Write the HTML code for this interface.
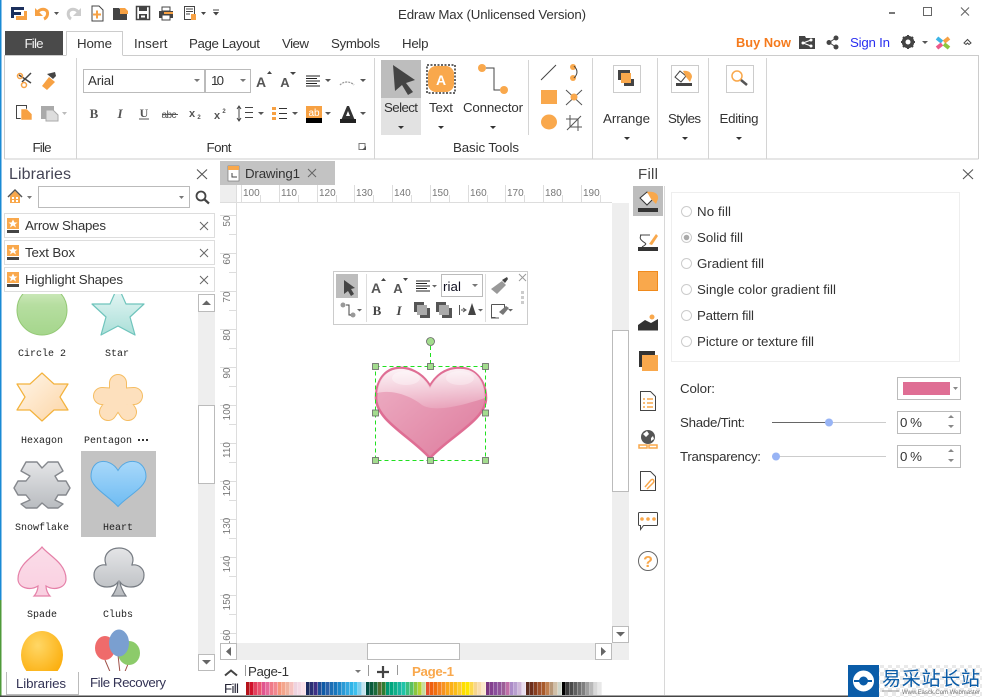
<!DOCTYPE html>
<html lang="en">
<head>
<meta charset="utf-8">
<title>Edraw Max (Unlicensed Version)</title>
<style>
html,body{margin:0;padding:0;background:#fff;width:982px;height:697px;overflow:hidden}
#app{position:relative;width:982px;height:697px;overflow:hidden}
svg{position:absolute;left:0;top:0}
text{font-family:"Liberation Sans","Noto Sans CJK SC",sans-serif;font-size:13.3px;fill:#333}
.m{font-family:"Liberation Mono",monospace;font-size:10px;fill:#222;text-anchor:middle}
.c{text-anchor:middle}
.r{font-size:10px;fill:#777}
.rv{font-size:10px;fill:#777;text-anchor:middle}
#sw{position:absolute;left:246px;top:682px;height:13px;display:flex}
#sw i{display:block;width:4px;height:13px;box-sizing:border-box;border-right:.5px solid rgba(255,255,255,.35)}
</style>
</head>
<body>
<div id="app">
<svg width="982" height="697" viewBox="0 0 982 697">
<defs>
<path id="ht" d="M54,19C46,5 32,0 22,1C8,2 0,15 0,31C0,53 34,69 54,91C74,69 110,53 110,31C110,15 100,2 86,1C74,0 62,5 54,19Z"/>
<linearGradient id="gp" x1="0" y1="0" x2="1" y2="1"><stop offset="0" stop-color="#eeb0c5"/><stop offset="1" stop-color="#dd7a9c"/></linearGradient>
<linearGradient id="gl" x1="0" y1="0" x2="0" y2="1"><stop offset="0" stop-color="#fff" stop-opacity=".85"/><stop offset="1" stop-color="#fff" stop-opacity=".15"/></linearGradient>
<linearGradient id="gb" x1="0" y1="0" x2="0" y2="1"><stop offset="0" stop-color="#a8d8fa"/><stop offset="1" stop-color="#6fbcf2"/></linearGradient>
<linearGradient id="gg" x1="0" y1="0" x2="0" y2="1"><stop offset="0" stop-color="#d8eec8"/><stop offset=".4" stop-color="#b6dea0"/><stop offset="1" stop-color="#a5d68c"/></linearGradient>
<linearGradient id="gt" x1="0" y1="0" x2="0" y2="1"><stop offset="0" stop-color="#eaf8f7"/><stop offset="1" stop-color="#aadfd8"/></linearGradient>
<linearGradient id="go" x1="0" y1="0" x2="1" y2="1"><stop offset="0" stop-color="#fff6ea"/><stop offset="1" stop-color="#fcd5a5"/></linearGradient>
<linearGradient id="gs" x1="0" y1="0" x2="0" y2="1"><stop offset="0" stop-color="#fbdde9"/><stop offset="1" stop-color="#f9cfe0"/></linearGradient>
<linearGradient id="gc" x1="0" y1="0" x2="0" y2="1"><stop offset="0" stop-color="#e4e5e7"/><stop offset="1" stop-color="#b9bcc0"/></linearGradient>
<radialGradient id="gy" cx=".4" cy=".3" r=".8"><stop offset="0" stop-color="#ffd766"/><stop offset="1" stop-color="#fba800"/></radialGradient>
<clipPath id="lib"><rect x="4" y="294" width="193" height="377"/></clipPath>
<pattern id="chk" width="8" height="8" patternUnits="userSpaceOnUse"><rect width="8" height="8" fill="#fff"/><rect width="4" height="4" fill="#e9e9e9"/><rect x="4" y="4" width="4" height="4" fill="#e9e9e9"/></pattern>
</defs>

<!-- window edge -->
<rect x="0" y="0" width="1.5" height="600" fill="#1a8ad4"/>
<rect x="0" y="600" width="1.5" height="97" fill="#4f9a3a"/>
<rect x="0" y="695.5" width="848" height="1.5" fill="#444"/>

<!-- quick access -->
<path d="M11,7h13v3h-10v2h7v3h-7v3h-3z" fill="#1c2f5c"/>
<path d="M16,16h8v-5h3v9h-11z" fill="#f7a143"/>
<path d="M37,14a6,6 0 0 1 10,-3a6,6 0 0 1 -3,8" fill="none" stroke="#f7a143" stroke-width="3"/>
<path d="M35,8v8h8z" fill="#f7a143"/>
<path d="M54,12h5l-2.500,3z" fill="#555"/>
<path d="M79,14a6,6 0 0 0 -10,-3a6,6 0 0 0 2,8" fill="none" stroke="#ccc" stroke-width="3"/>
<path d="M81,8v8h-8z" fill="#ccc"/>
<path d="M92,6h7l4,4v11h-11z" fill="#fff" stroke="#444"/>
<path d="M97,10.500v8M93,14.500h8" stroke="#f7a143" stroke-width="2"/>
<path d="M113,8h6l2,2h6v10h-14z" fill="#444"/>
<path d="M120,8h5l3,3v3h-8z" fill="#f7a143"/>
<rect x="136.500" y="6.500" width="13" height="13" fill="#fff" stroke="#444" stroke-width="1.500"/>
<rect x="139" y="7" width="8" height="4" fill="#444"/><rect x="139" y="14" width="8" height="5" fill="#444"/><rect x="141" y="15.500" width="4" height="2" fill="#fff"/>
<rect x="162" y="7" width="8" height="4" fill="#fff" stroke="#444"/><rect x="159" y="11" width="14" height="7" fill="#444"/><rect x="164" y="12" width="9" height="2" fill="#f7a143"/><rect x="162" y="15" width="8" height="5" fill="#fff" stroke="#444"/>
<rect x="184.500" y="6.500" width="10" height="13" fill="#fff" stroke="#444"/>
<path d="M186,9h7M186,11.500h7M186,14h4" stroke="#444"/>
<path d="M191,14h5v6h-5z" fill="#f7a143"/>
<path d="M201,12h5l-2.500,3z" fill="#444"/>
<path d="M213,9.500h6v1h-6zM213,12h6l-3,3.500z" fill="#444"/>

<text x="398" y="19" textLength="188">Edraw Max (Unlicensed Version)</text>
<rect x="889" y="12" width="6" height="2" fill="#777"/>
<rect x="923.500" y="7.500" width="8" height="8" fill="none" stroke="#666"/>
<path d="M961,7.500l8,8M969,7.500l-8,8" stroke="#666" stroke-width="1.100"/>

<!-- tabs -->
<rect x="5" y="31" width="58" height="24" fill="#4a4a4a"/>
<text x="34" y="48" class="c" style="fill:#f2f2f2" textLength="19">File</text>
<path d="M66.500,55V31.500H122.500V55" fill="#fff" stroke="#ccc"/>
<text x="94.500" y="48" class="c" textLength="35">Home</text>
<text x="134" y="48" textLength="33.500">Insert</text>
<text x="189" y="48" textLength="71">Page Layout</text>
<text x="282" y="48" textLength="27">View</text>
<text x="331" y="48" textLength="49">Symbols</text>
<text x="402" y="48" textLength="26.500">Help</text>

<text x="736" y="47" style="font-weight:bold;fill:#f57a1c;font-size:12.800px" textLength="55">Buy Now</text>
<path d="M799,36h6l1,2h9v11h-16z" fill="#444"/>
<path d="M803,43l8,-3M803,43l8,3" stroke="#fff"/><circle cx="803" cy="43" r="1.500" fill="#fff"/><circle cx="811" cy="40" r="1.500" fill="#fff"/><circle cx="811" cy="46" r="1.500" fill="#fff"/>
<path d="M829,42.500l7,-4.500M829,42.500l7,4.500" stroke="#444"/><circle cx="829" cy="42.500" r="2.500" fill="#444"/><circle cx="836" cy="38" r="2.500" fill="#444"/><circle cx="836" cy="47" r="2.500" fill="#444"/>
<text x="850" y="47" style="fill:#2a2ff0" textLength="40">Sign In</text>
<circle cx="908" cy="42" r="4.500" fill="none" stroke="#444" stroke-width="3.500"/>
<path d="M908,35v14M901,42h14M903,37l10,10M913,37l-10,10" stroke="#444" stroke-width="2"/><circle cx="908" cy="42" r="2.500" fill="#fff"/>
<path d="M922,41h6l-3,3z" fill="#555"/>
<path d="M937,38l5,4" stroke="#3cb4e6" stroke-width="4"/><path d="M949,38l-5,4" stroke="#f7a143" stroke-width="4"/><path d="M937,48l5,-4" stroke="#ec5a8a" stroke-width="4"/><path d="M949,48l-5,-4" stroke="#8cc63f" stroke-width="4"/>
<path d="M964,43l3.500,-3.500l3.500,3.500l-2,1.500l-1.500,-1.500l-1.500,1.500z" fill="none" stroke="#444"/>

<!-- ribbon -->
<path d="M4.500,159V55.500H66.500M122.500,55.500H978.500V159M4.500,159H978.500" fill="none" stroke="#ccc"/>
<path d="M76.500,58V159M374.500,58V159M592.500,58V159M657.500,58V159M708.500,58V159M766.500,58V159" stroke="#d4d4d4"/>
<path d="M528.500,60V135" stroke="#d4d4d4"/>
<text x="42" y="152" class="c" textLength="19">File</text>
<text x="219" y="152" class="c" textLength="25">Font</text>
<text x="453" y="152" textLength="66">Basic Tools</text>
<path d="M359,143.500h6v6h-6z" fill="none" stroke="#777"/><path d="M366,150v-4l-4,4z" fill="#555"/>

<!-- file group -->
<path d="M19,75l12,8M31,73l-9,9" stroke="#444" stroke-width="1.500"/><circle cx="20" cy="76" r="2.500" fill="none" stroke="#f7a143" stroke-width="1.500"/><circle cx="24" cy="85" r="2.500" fill="none" stroke="#f7a143" stroke-width="1.500"/>
<path d="M47,74l6,5l3,-3l-1,-4z" fill="#444"/>
<path d="M49,77l6,5l-8,8l-5,-4z" fill="#f7a143"/>
<rect x="16.500" y="105.500" width="10" height="13" fill="#fff" stroke="#444"/>
<path d="M21,109h6l5,5v6h-11z" fill="#f7a143" stroke="#fff" stroke-width=".6"/>
<rect x="41" y="106" width="13" height="13" fill="#aaa"/><path d="M46,110h7l5,5v6h-12z" fill="#ddd" stroke="#aaa"/>
<path d="M62,112h5l-2.500,3z" fill="#bbb"/>

<!-- font group -->
<rect x="83.500" y="69.500" width="121" height="23" fill="#fff" stroke="#bbb"/>
<rect x="205.500" y="69.500" width="45" height="23" fill="#fff" stroke="#bbb"/>
<text x="88" y="85" textLength="26">Arial</text>
<text x="211" y="85" textLength="13">10</text>
<path d="M194,79h6l-3,3zM240,79h6l-3,3z" fill="#777"/>
<text x="261" y="87" class="c" style="font-size:14px;fill:#555;font-weight:bold">A</text><path d="M267,74h5l-2.500,-3z" fill="#444"/>
<text x="285" y="87" class="c" style="font-size:13px;fill:#555;font-weight:bold">A</text><path d="M290,72h6l-3,3z" fill="#444"/>
<path d="M306,76h14M306,78.500h11M306,81h14M306,83.500h11M306,86h14" stroke="#222"/><path d="M325,79h6l-3,3z" fill="#555"/>
<path d="M340,85a9,8 0 0 1 14,0" fill="none" stroke="#999" stroke-dasharray="2 1" stroke-width="1.300"/><path d="M360,79h6l-3,3z" fill="#555"/>
<text x="94" y="118" class="c" style="font-family:'Liberation Serif',serif;font-weight:bold;font-size:13px;fill:#555">B</text>
<text x="120" y="118" class="c" style="font-family:'Liberation Serif',serif;font-weight:bold;font-style:italic;font-size:13px;fill:#555">I</text>
<text x="144" y="117" class="c" style="font-family:'Liberation Serif',serif;font-weight:bold;font-size:12px;fill:#555">U</text><path d="M139,119h10" stroke="#555"/>
<text x="169" y="118" class="c" style="font-size:10px;fill:#555" textLength="15">abc</text><path d="M162,114.500h16" stroke="#555"/>
<text x="192" y="117" class="c" style="font-weight:bold;font-size:11px;fill:#555">x</text><text x="199" y="119" class="c" style="font-weight:bold;font-size:6px;fill:#555">2</text>
<text x="217" y="119" class="c" style="font-weight:bold;font-size:11px;fill:#555">x</text><text x="224" y="113" class="c" style="font-weight:bold;font-size:6px;fill:#555">2</text>
<path d="M239,107v13M237,109l2,-3l2,3M237,118l2,3l2,-3M245,107.500h8M245,112.500h8M245,117.500h8" stroke="#444" fill="none"/>
<path d="M258,112h6l-3,3z" fill="#555"/>
<path d="M272,107h4v3h-4zM272,112h4v3h-4zM272,117h4v3h-4z" fill="#f7a143"/><path d="M279,108.500h8M279,113.500h8M279,118.500h8" stroke="#333"/>
<path d="M292,112h6l-3,3z" fill="#555"/>
<rect x="306" y="106" width="16" height="12" fill="#f7a143"/><text x="314" y="116" class="c" style="fill:#fff;font-size:10px">ab</text><rect x="306" y="118" width="16" height="5" fill="#000"/>
<path d="M325,112h6l-3,3z" fill="#555"/>
<path d="M340,123l7,-17h2l7,17h-4l-1.500,-4h-5l-1.500,4zM346,116h4l-2,-5z" fill="#333"/><rect x="340" y="119" width="16" height="4" fill="#222"/>
<path d="M360,112h6l-3,3z" fill="#555"/>

<!-- basic tools -->
<rect x="381" y="60" width="40" height="38" fill="#bdbdbd"/>
<rect x="381" y="98" width="40" height="37" fill="#e2e2e2"/>
<path d="M393,65l22,15l-9,3l7,9l-5,3l-6,-10l-7,6z" fill="#444"/>
<text x="401" y="112" class="c" textLength="34">Select</text>
<path d="M398,126h6l-3,3z" fill="#333"/>
<rect x="427" y="65" width="28" height="28" fill="none" stroke="#333" stroke-width="1.500" stroke-dasharray="2 1.500"/>
<rect x="428" y="66" width="26" height="26" rx="8" fill="#f9a84c"/>
<text x="441" y="85" class="c" style="fill:#fff;font-weight:bold;font-size:14px">A</text>
<text x="441" y="112" class="c" textLength="24">Text</text>
<path d="M438,126h6l-3,3z" fill="#333"/>
<circle cx="482" cy="68" r="4" fill="#f9a84c"/><circle cx="504" cy="90" r="4" fill="#f9a84c"/>
<path d="M486,68h8v22h6" fill="none" stroke="#444"/>
<text x="463" y="112" textLength="60">Connector</text>
<path d="M490,126h6l-3,3z" fill="#333"/>
<path d="M541,80l15,-15" stroke="#444"/>
<circle cx="573" cy="67" r="3" fill="#f9a84c"/><circle cx="573" cy="78" r="3" fill="#f9a84c"/><path d="M574,66q6,6 0,12" fill="none" stroke="#444"/>
<rect x="541" y="90" width="16" height="14" fill="#f9a84c"/>
<path d="M566,90l16,15M582,90l-16,15" stroke="#555"/><circle cx="574" cy="97" r="3.500" fill="#f9a84c"/>
<ellipse cx="549" cy="122" rx="8" ry="7.500" fill="#f9a84c"/>
<path d="M570,115v12h12M566,119h12v12M567,130l14,-14" fill="none" stroke="#555"/>

<!-- arrange/styles/editing -->
<rect x="613.500" y="65.500" width="27" height="27" fill="#fff" stroke="#ccc"/>
<rect x="618" y="70" width="12" height="10" fill="#444"/><rect x="624" y="79" width="10" height="7" fill="#444"/><rect x="621" y="73" width="10" height="10" fill="#f9a84c"/>
<text x="626.500" y="123" class="c" textLength="47">Arrange</text>
<path d="M624,137h6l-3,3z" fill="#333"/>
<rect x="671.500" y="65.500" width="27" height="27" fill="#fff" stroke="#ccc"/>
<path d="M680,71l6,5l-5,6l-6,-5z" fill="#fff" stroke="#444"/><path d="M683,71c5,-1 9,2 9,6l-2,5l-4,-5z" fill="#f9a84c"/><rect x="676" y="83" width="16" height="3" fill="#444"/>
<text x="684.500" y="123" class="c" textLength="33">Styles</text>
<path d="M682,137h6l-3,3z" fill="#333"/>
<rect x="726.500" y="65.500" width="27" height="27" fill="#fff" stroke="#ccc"/>
<circle cx="737" cy="76" r="5" fill="#fff" stroke="#f9a84c" stroke-width="1.500"/><path d="M741,80l6,5" stroke="#555" stroke-width="2.500"/>
<text x="739" y="123" class="c" textLength="39">Editing</text>
<path d="M736,137h6l-3,3z" fill="#333"/>

<!-- libraries panel -->
<text x="9" y="179" style="font-size:16px;fill:#445" textLength="62">Libraries</text>
<path d="M197,169.500l10,9.500M207,169.500l-10,9.500" stroke="#555" stroke-width="1.100"/>
<path d="M8,197l7,-7l7,7" fill="none" stroke="#555" stroke-width="1.500"/>
<path d="M10,196l5,-5l5,5v7h-10z" fill="#f9a84c"/>
<path d="M12,197h2v2h-2zM16,197h2v2h-2zM12,200h2v2h-2zM16,200h2v2h-2z" fill="#fff"/>
<path d="M27,196h5l-2.500,3z" fill="#777"/>
<rect x="38.500" y="186.500" width="151" height="21" fill="#fff" stroke="#bbb"/>
<path d="M179,196h5l-2.500,3z" fill="#777"/>
<circle cx="201" cy="196" r="4.500" fill="none" stroke="#444" stroke-width="1.800"/><path d="M204,199l5,4.500" stroke="#444" stroke-width="2.200"/>

<rect x="4.500" y="213.500" width="210" height="24" fill="#fff" stroke="#ddd"/>
<rect x="4.500" y="240.500" width="210" height="24" fill="#fff" stroke="#ddd"/>
<rect x="4.500" y="267.500" width="210" height="24" fill="#fff" stroke="#ddd"/>
<g>
<rect x="7" y="218" width="12" height="11" fill="#f9a84c"/><rect x="7" y="230" width="12" height="3" fill="#444"/><path d="M13,219.500l1.500,3h3l-2.500,2l1,3l-3,-2l-3,2l1,-3l-2.500,-2h3z" fill="#fff"/>
<rect x="7" y="245" width="12" height="11" fill="#f9a84c"/><rect x="7" y="257" width="12" height="3" fill="#444"/><path d="M13,246.500l1.500,3h3l-2.500,2l1,3l-3,-2l-3,2l1,-3l-2.500,-2h3z" fill="#fff"/>
<rect x="7" y="272" width="12" height="11" fill="#f9a84c"/><rect x="7" y="284" width="12" height="3" fill="#444"/><path d="M13,273.500l1.500,3h3l-2.500,2l1,3l-3,-2l-3,2l1,-3l-2.500,-2h3z" fill="#fff"/>
</g>
<text x="25" y="230" textLength="81">Arrow Shapes</text>
<text x="25" y="257" textLength="50">Text Box</text>
<text x="25" y="284" textLength="98">Highlight Shapes</text>
<path d="M200,222l8,8M208,222l-8,8M200,249l8,8M208,249l-8,8M200,276l8,8M208,276l-8,8" stroke="#666"/>

<!-- shapes -->
<g clip-path="url(#lib)">
<circle cx="42" cy="310" r="25" fill="url(#gg)" stroke="#93c874"/>
<path d="M118,286l8,18h18l-14,13l5,18l-17,-9l-17,9l5,-18l-14,-13h18z" fill="url(#gt)" stroke="#6fc4bc" stroke-width="1.200" stroke-linejoin="round"/>
<rect x="81" y="451" width="75" height="86" fill="#c3c3c3"/>
<path d="M42,373l12,11h14l-8,13l8,13h-14l-12,11l-12,-11h-13l8,-13l-8,-13h13z" fill="url(#go)" stroke="#f3b23c" stroke-width="1.200" stroke-linejoin="round"/>
<g fill="none" stroke-linecap="round">
<path stroke="#f5bd62" stroke-width="18" d="M118,397V383M118,397L102,396M118,397L108,412M118,397L128,412M118,397L134,396"/>
<path stroke="#fde0bd" stroke-width="16" d="M118,397V383M118,397L102,396M118,397L108,412M118,397L128,412M118,397L134,396"/>
</g>
<path d="M26,462H37L42,468L48,462H58L63,471L55,476L58,481H66L70,488L66,495H58L55,500L63,504L58,508H48L42,503L37,508H26L21,504L30,500L26,495H18L14,488L18,481H26L30,476L21,471Z" fill="url(#gc)" stroke="#85888d" stroke-width="1.400" stroke-linejoin="round"/>
<g transform="translate(91,461) scale(.5)"><use href="#ht" fill="url(#gb)" stroke="#55a8e2" stroke-width="2"/></g>
<path d="M42,547c6,8 24,16 24,32c0,9 -12,12 -20,7c0,4 2,8 4,10h-16c2,-2 4,-6 4,-10c-8,5 -20,2 -20,-7c0,-16 18,-24 24,-32z" fill="url(#gs)" stroke="#e580a8" stroke-width="1.200"/>
<path d="M119,548c8,0 14,5 14,12c0,2 -1,4 -1,5c6,-1 12,3 12,10c0,8 -6,12 -13,12c-5,0 -9,-2 -11,-5c0,3 3,10 6,14h-14c3,-4 6,-11 6,-14c-2,3 -6,5 -11,5c-7,0 -13,-4 -13,-12c0,-7 6,-11 12,-10c0,-1 -1,-3 -1,-5c0,-7 6,-12 14,-12z" fill="url(#gc)" stroke="#777c83" stroke-width="1.200"/>
<ellipse cx="42" cy="655" rx="21" ry="24" fill="url(#gy)"/>
<path d="M105,660l6,14M118,655l2,18M128,664l-4,10" stroke="#a0524a"/>
<ellipse cx="129" cy="653" rx="11" ry="12" fill="#8ccb6a"/>
<ellipse cx="105" cy="648" rx="10" ry="12" fill="#ef6b6b"/>
<ellipse cx="119" cy="643" rx="10" ry="13.500" fill="#7a9fd0"/>
</g>
<text class="m" x="42" y="356">Circle 2</text>
<text class="m" x="117" y="356">Star</text>
<text class="m" x="42" y="443">Hexagon</text>
<text class="m" x="108" y="443">Pentagon</text>
<path d="M138,439h2v2h-2zM142,439h2v2h-2zM146,439h2v2h-2z" fill="#333"/>
<text class="m" x="42" y="530">Snowflake</text>
<text class="m" x="118" y="530">Heart</text>
<text class="m" x="42" y="617">Spade</text>
<text class="m" x="118" y="617">Clubs</text>

<!-- lib scrollbar -->
<rect x="198" y="294" width="17" height="377" fill="#eee"/>
<rect x="198.500" y="294.500" width="16" height="17" fill="#fff" stroke="#bbb"/>
<path d="M202,305h9l-4.500,-4.500z" fill="#666"/>
<rect x="198.500" y="405.500" width="16" height="78" fill="#fff" stroke="#bbb"/>
<rect x="198.500" y="654.500" width="16" height="16" fill="#fff" stroke="#bbb"/>
<path d="M202,660h9l-4.500,4.500z" fill="#666"/>

<!-- bottom lib tabs -->
<path d="M6.500,672V694.500H78.500V672" fill="#fff" stroke="#bbb"/>
<text x="16" y="688" style="fill:#335" textLength="50">Libraries</text>
<text x="90" y="687" style="fill:#335" textLength="76">File Recovery</text>

<!-- canvas -->
<rect x="220" y="161" width="115" height="24" fill="#c3c3c3"/>
<rect x="228" y="166" width="11" height="15" fill="#fff" stroke="#777" stroke-width=".7"/>
<rect x="228" y="166" width="11" height="4" fill="#f9a84c"/>
<path d="M232,173v4h5" fill="none" stroke="#444"/>
<text x="245" y="178" textLength="55">Drawing1</text>
<path d="M308,169l8,8M316,169l-8,8" stroke="#666"/>
<rect x="220" y="185" width="17" height="18" fill="#eee"/>
<path d="M220,202.500H612M236.500,185V643" stroke="#ddd"/>
<path d="M241.500,185v18M279.500,185v18M317.500,185v18M354.500,185v18M392.500,185v18M430.500,185v18M468.500,185v18M505.500,185v18M543.500,185v18M581.500,185v18" stroke="#ddd"/>
<path d="M260.500,195v8M298.500,195v8M336.500,195v8M373.500,195v8M411.500,195v8M449.500,195v8M487.500,195v8M524.500,195v8M562.500,195v8M600.500,195v8" stroke="#ddd"/>
<text class="r" x="243" y="196">100</text><text class="r" x="281" y="196">110</text><text class="r" x="319" y="196">120</text><text class="r" x="356" y="196">130</text><text class="r" x="394" y="196">140</text><text class="r" x="432" y="196">150</text><text class="r" x="470" y="196">160</text><text class="r" x="507" y="196">170</text><text class="r" x="545" y="196">180</text><text class="r" x="583" y="196">190</text>
<path d="M220,215.500h17M220,253.500h17M220,291.500h17M220,329.500h17M220,367.500h17M220,405.500h17M220,443.500h17M220,481.500h17M220,519.500h17M220,557.500h17M220,595.500h17M220,633.500h17" stroke="#ddd"/>
<path d="M229,234.500h8M229,272.500h8M229,310.500h8M229,348.500h8M229,386.500h8M229,424.500h8M229,462.500h8M229,500.500h8M229,538.500h8M229,576.500h8M229,614.500h8" stroke="#ddd"/>
<text class="rv" transform="translate(230,221) rotate(-90)">50</text>
<text class="rv" transform="translate(230,259) rotate(-90)">60</text>
<text class="rv" transform="translate(230,297) rotate(-90)">70</text>
<text class="rv" transform="translate(230,335) rotate(-90)">80</text>
<text class="rv" transform="translate(230,373) rotate(-90)">90</text>
<text class="rv" transform="translate(230,412) rotate(-90)">100</text>
<text class="rv" transform="translate(230,450) rotate(-90)">110</text>
<text class="rv" transform="translate(230,488) rotate(-90)">120</text>
<text class="rv" transform="translate(230,526) rotate(-90)">130</text>
<text class="rv" transform="translate(230,564) rotate(-90)">140</text>
<text class="rv" transform="translate(230,602) rotate(-90)">150</text>
<text class="rv" transform="translate(230,638) rotate(-90)">160</text>

<!-- canvas scrollbars -->
<rect x="612" y="203" width="17" height="440" fill="#eee"/>
<rect x="612.500" y="330.500" width="16" height="161" fill="#fff" stroke="#bbb"/>
<rect x="612.500" y="626.500" width="16" height="16" fill="#fff" stroke="#bbb"/>
<path d="M616,632h9l-4.500,4.500z" fill="#666"/>
<rect x="220" y="643" width="409" height="17" fill="#eee"/>
<rect x="220.500" y="643.500" width="16" height="16" fill="#fff" stroke="#bbb"/>
<path d="M231,647v9l-5,-4.500z" fill="#666"/>
<rect x="367.500" y="643.500" width="92" height="16" fill="#fff" stroke="#bbb"/>
<rect x="595.500" y="643.500" width="16" height="16" fill="#fff" stroke="#bbb"/>
<path d="M601,647v9l5,-4.500z" fill="#666"/>

<!-- page bar -->
<path d="M225,675.500l6,-5l6,5" fill="none" stroke="#444" stroke-width="2"/>
<path d="M245.500,665v11M368.500,665v11M397.500,665v10" stroke="#999"/>
<text x="248" y="676" textLength="41">Page-1</text>
<path d="M355,670h6l-3,3z" fill="#777"/>
<path d="M383,666v12M377,672h12" stroke="#444" stroke-width="2.200"/>
<text x="412" y="676" style="font-weight:bold;fill:#f9a84c" textLength="42">Page-1</text>
<text x="224" y="693" style="fill:#223" textLength="15">Fill</text>

<!-- heart & selection -->
<g transform="translate(376,367)">
<use href="#ht" fill="url(#gp)" stroke="#df6e94" stroke-width="2.600"/>
<path d="M1,26C18,22 36,30 46,38C56,44 76,42 109,31C109,12 98,2 86,2C74,1 62,6 54,20C46,6 32,1 22,2C10,3 2,13 1,26Z" fill="url(#gl)"/>
<ellipse cx="30" cy="11" rx="14" ry="7" fill="#fff" opacity=".35"/>
<ellipse cx="84" cy="11" rx="14" ry="7" fill="#fff" opacity=".3"/>
</g>
<path d="M430.500,346V367" stroke="#1fe01f" stroke-dasharray="4 3"/>
<rect x="375.500" y="366.500" width="110" height="94" fill="none" stroke="#1fe01f" stroke-dasharray="4 3"/>
<circle cx="430.500" cy="341.500" r="4" fill="#a3dc8e" stroke="#666" stroke-width=".8"/>
<g fill="#a3dc8e" stroke="#666" stroke-width=".8">
<rect x="372.500" y="363.500" width="6" height="6"/><rect x="427.500" y="363.500" width="6" height="6"/><rect x="482.500" y="363.500" width="6" height="6"/>
<rect x="372.500" y="410" width="6" height="6"/><rect x="482.500" y="410" width="6" height="6"/>
<rect x="372.500" y="457.500" width="6" height="6"/><rect x="427.500" y="457.500" width="6" height="6"/><rect x="482.500" y="457.500" width="6" height="6"/>
</g>

<!-- floating toolbar -->
<rect x="333.500" y="271.500" width="194" height="53" fill="#fff" stroke="#ccc"/>
<rect x="336" y="274" width="22" height="24" fill="#bdbdbd"/>
<path d="M344,280l11,8l-4,1l3,5l-3,2l-3,-5l-4,3z" fill="#444"/>
<path d="M366.500,274v48M485.500,274v48" stroke="#ddd"/>
<text x="376" y="293" class="c" style="font-size:14px;font-weight:bold;fill:#555">A</text><path d="M381,281h5l-2.500,-3z" fill="#444"/>
<text x="398" y="293" class="c" style="font-size:13px;font-weight:bold;fill:#555">A</text><path d="M403,278h5l-2.500,3z" fill="#444"/>
<path d="M416,281h14M416,283.500h11M416,286h14M416,288.500h11M416,291h14" stroke="#222"/><path d="M432,285h5l-2.500,2.500z" fill="#666"/>
<rect x="441.500" y="274.500" width="41" height="22" fill="#fff" stroke="#bbb"/>
<text x="443" y="291" textLength="18" style="fill:#112">rial</text>
<path d="M472,284h6l-3,3z" fill="#777"/>
<path d="M502,280l5,-3l1,2l-3,4z" fill="#444"/><path d="M502,281l4,4l-9,9l-6,-5z" fill="#999"/>
<path d="M519,274l7,7M526,274l-7,7" stroke="#999"/>
<path d="M521,291h3v3h-3zM521,296h3v3h-3zM521,301h3v3h-3z" fill="#ccc"/>
<circle cx="343" cy="305" r="2.500" fill="#999"/><circle cx="353" cy="315" r="2.500" fill="#999"/>
<path d="M346,305h3v10h2" fill="none" stroke="#444"/><path d="M357,309h5l-2.500,2.500z" fill="#666"/>
<text x="377" y="315" class="c" style="font-family:'Liberation Serif',serif;font-weight:bold;font-size:13px;fill:#444">B</text>
<text x="399" y="315" class="c" style="font-family:'Liberation Serif',serif;font-weight:bold;font-style:italic;font-size:13px;fill:#444">I</text>
<rect x="414" y="302" width="10" height="10" fill="#555"/><rect x="420" y="308" width="10" height="10" fill="#555"/><rect x="417" y="305" width="10" height="10" fill="#aaa"/>
<rect x="436" y="302" width="10" height="10" fill="#555"/><rect x="442" y="308" width="10" height="10" fill="#555"/><rect x="439" y="305" width="10" height="10" fill="#aaa"/>
<path d="M459.500,305v10M461,310h5M463,308l3,2l-3,2" fill="none" stroke="#555"/><path d="M472,303l4,12h-8z" fill="#444"/><path d="M478,309h5l-2.500,2.500z" fill="#666"/>
<path d="M491.500,304.500h13v5M491.500,304.500v13h4" fill="none" stroke="#555"/><path d="M499,312l7,-6l3,2l-6,7z" fill="#777"/><path d="M491,318h8" stroke="#555"/><path d="M508,309h5l-2.500,2.500z" fill="#666"/>

<!-- fill panel -->
<text x="638" y="179" style="font-size:15px;fill:#444" textLength="20">Fill</text>
<path d="M963,169.500l10,9.500M973,169.500l-10,9.500" stroke="#555" stroke-width="1.100"/>
<path d="M664.500,186V695" stroke="#d8d8d8"/>
<rect x="633" y="186" width="30" height="30" fill="#bdbdbd"/>
<path d="M640,198l7,-6l7,6l-7,7z" fill="#fff" stroke="#333"/>
<path d="M647,192c6,-1 12,1 11,7l-2,5l-5,-5z" fill="#f9a84c"/>
<rect x="638" y="208" width="20" height="4" fill="#333"/>
<path d="M640,235h10M641,235c-2,4 0,5 4,8c2,1 0,2 -3,4" fill="none" stroke="#444"/>
<path d="M649,244l7,-10l2,2l-6,9z" fill="#f9a84c"/>
<rect x="638" y="247" width="20" height="4" fill="#333"/>
<rect x="638.500" y="271.500" width="19" height="19" fill="#f9a84c" stroke="#f08a1c"/>
<path d="M638,325l7,-5l6,3l7,-4v11h-20z" fill="#333"/><circle cx="652" cy="317" r="2.500" fill="#f9a84c"/><path d="M638,330.500h20" stroke="#999"/>
<rect x="639" y="351" width="16" height="16" fill="#333"/><rect x="642" y="355" width="16" height="16" fill="#f9a84c"/>
<path d="M640.500,391.500h10l5,5v14h-15z" fill="#fff" stroke="#444"/>
<path d="M643,399h2M647,399h6M643,403h2M647,403h6M643,407h2M647,407h6" stroke="#f9a84c" stroke-width="1.500"/>
<circle cx="648" cy="437" r="7" fill="#555"/><path d="M643,434l4,-3l2,3l-3,3zM651,438l2,-2l1,3l-3,2z" fill="#fff"/>
<path d="M639,445h8v3h-8zM649,445h8v3h-8z" fill="none" stroke="#f9a84c" stroke-width="1.500"/>
<path d="M640.500,471.500h10l5,5v14h-15z" fill="#fff" stroke="#444"/>
<path d="M645,487l6,-7c2,-2 4,1 2,3l-6,6" fill="none" stroke="#f9a84c" stroke-width="1.500"/>
<path d="M640.500,512.500h16a1,1 0 0 1 1,1v11a1,1 0 0 1 -1,1h-13l-3,4v-4h-1a1,1 0 0 1 -1,-1v-11a1,1 0 0 1 1,-1z" fill="#fff" stroke="#444"/>
<circle cx="642" cy="519" r="1.800" fill="#f9a84c"/><circle cx="648" cy="519" r="1.800" fill="#f9a84c"/><circle cx="654" cy="519" r="1.800" fill="#f9a84c"/>
<circle cx="648" cy="561" r="9.500" fill="#fff" stroke="#666"/>
<text x="648" y="567" class="c" style="font-weight:bold;font-size:16px;fill:#f9a84c">?</text>

<rect x="671.500" y="192.500" width="288" height="169" fill="#fff" stroke="#eee"/>
<g fill="#fff" stroke="#ccc">
<circle cx="686.500" cy="211.500" r="5"/><circle cx="686.500" cy="237.500" r="5"/><circle cx="686.500" cy="263.500" r="5"/><circle cx="686.500" cy="289.500" r="5"/><circle cx="686.500" cy="315.500" r="5"/><circle cx="686.500" cy="341.500" r="5"/>
</g>
<circle cx="686.500" cy="237.500" r="2.800" fill="#aaa"/>
<text x="697" y="216" textLength="34">No fill</text>
<text x="697" y="242" textLength="46">Solid fill</text>
<text x="697" y="268" textLength="67">Gradient fill</text>
<text x="697" y="294" textLength="139">Single color gradient fill</text>
<text x="697" y="320" textLength="57">Pattern fill</text>
<text x="697" y="346" textLength="117">Picture or texture fill</text>
<text x="680" y="393" textLength="35">Color:</text>
<text x="680" y="427" textLength="65">Shade/Tint:</text>
<text x="680" y="461" textLength="81">Transparency:</text>
<rect x="897.500" y="377.500" width="63" height="22" fill="#fff" stroke="#bbb"/>
<rect x="903" y="382" width="47" height="13" fill="#df6e94"/>
<path d="M953,387h5l-2.500,3z" fill="#888"/>
<path d="M772,422.500h57" stroke="#666"/><path d="M829,422.500h57M772,456.500h114" stroke="#ccc"/>
<circle cx="829" cy="422.500" r="4" fill="#98b4f5"/>
<circle cx="776" cy="456.500" r="4" fill="#98b4f5"/>
<rect x="897.500" y="411.500" width="63" height="22" fill="#fff" stroke="#bbb"/>
<rect x="897.500" y="445.500" width="63" height="22" fill="#fff" stroke="#bbb"/>
<text x="900" y="427" textLength="22">0 %</text>
<text x="900" y="461" textLength="22">0 %</text>
<path d="M948,418h6l-3,-3zM948,425h6l-3,3zM948,452h6l-3,-3zM948,459h6l-3,3z" fill="#888"/>

<!-- watermark -->
<rect x="848" y="665" width="134" height="32" fill="url(#chk)"/>
<rect x="848" y="665" width="31" height="32" fill="#0a5ca8"/>
<circle cx="863.500" cy="681" r="7.500" fill="none" stroke="#fff" stroke-width="6"/>
<path d="M854,681h18" stroke="#0a5ca8" stroke-width="2"/>
<text x="882" y="685" style="font-size:19px;fill:#0a5ca8;font-family:'Noto Sans CJK SC',sans-serif" textLength="98">易采站长站</text>
<path d="M882,691h17" stroke="#999"/>
<text x="902" y="694" style="font-size:6px;fill:#777" textLength="78">Www.Easck.Com Webmaster</text>
</svg>
<div id="sw"><i style="background:#b5121b"></i><i style="background:#d0112b"></i><i style="background:#e4405f"></i><i style="background:#ea5370"></i><i style="background:#e0558f"></i><i style="background:#e66a9b"></i><i style="background:#ef7a88"></i><i style="background:#f2888f"></i><i style="background:#f5967a"></i><i style="background:#f4a68c"></i><i style="background:#efb3a0"></i><i style="background:#f6c2c0"></i><i style="background:#eed3e0"></i><i style="background:#f5d9e5"></i><i style="background:#fce2ea"></i><i style="background:#1c2a5e"></i><i style="background:#2b2f75"></i><i style="background:#3f2f85"></i><i style="background:#1f4e96"></i><i style="background:#0f5aa6"></i><i style="background:#2a5fa8"></i><i style="background:#1c6fb5"></i><i style="background:#1877bd"></i><i style="background:#1e88c9"></i><i style="background:#2b9ad6"></i><i style="background:#35a9e0"></i><i style="background:#2fb4e8"></i><i style="background:#3dc0ee"></i><i style="background:#7fcdeb"></i><i style="background:#c5e4ef"></i><i style="background:#004d40"></i><i style="background:#0a5c3c"></i><i style="background:#1d6b3a"></i><i style="background:#556b2f"></i><i style="background:#2e7d32"></i><i style="background:#009973"></i><i style="background:#00a67e"></i><i style="background:#10b08a"></i><i style="background:#19b5a0"></i><i style="background:#20c4a8"></i><i style="background:#3abf7f"></i><i style="background:#5cbf60"></i><i style="background:#8cc63f"></i><i style="background:#b5d334"></i><i style="background:#c8dca0"></i><i style="background:#e8502a"></i><i style="background:#ee6010"></i><i style="background:#f07010"></i><i style="background:#f58220"></i><i style="background:#f79420"></i><i style="background:#faa61a"></i><i style="background:#fbb017"></i><i style="background:#fbbd18"></i><i style="background:#fdcb2c"></i><i style="background:#fede00"></i><i style="background:#fee600"></i><i style="background:#fdd84e"></i><i style="background:#f6d58f"></i><i style="background:#f8dcae"></i><i style="background:#fbe8cc"></i><i style="background:#7a3580"></i><i style="background:#83408f"></i><i style="background:#8a4f9c"></i><i style="background:#93559b"></i><i style="background:#9b5e96"></i><i style="background:#c06fa8"></i><i style="background:#ac8cc8"></i><i style="background:#b9a0d0"></i><i style="background:#d0b8da"></i><i style="background:#eadff0"></i><i style="background:#5c2a1e"></i><i style="background:#6e2f1c"></i><i style="background:#8a3f1f"></i><i style="background:#a0522d"></i><i style="background:#a85a2a"></i><i style="background:#c08050"></i><i style="background:#b89878"></i><i style="background:#d0c0a8"></i><i style="background:#ced6cb"></i><i style="background:#000"></i><i style="background:#3a3a3a"></i><i style="background:#4a4a4a"></i><i style="background:#606060"></i><i style="background:#707070"></i><i style="background:#808080"></i><i style="background:#a0a0a0"></i><i style="background:#b8b8b8"></i><i style="background:#d8d8d8"></i><i style="background:#e8e8e8"></i></div>
</div>
</body>
</html>
